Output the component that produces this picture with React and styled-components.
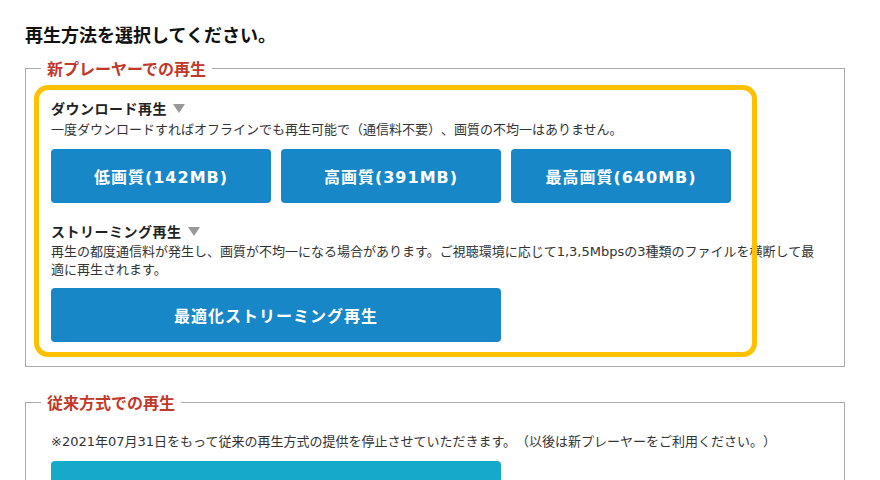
import React from "react";
import styled, { createGlobalStyle } from "styled-components";

const GlobalStyle = createGlobalStyle`
  body {
    margin: 0;
    background: #fff;
    font-family: "Noto Sans CJK JP", "Noto Sans", sans-serif;
    color: #333;
    text-spacing-trim: space-all;
  }
`;

const Page = styled.div`
  padding: 22px 35px 40px 25px;
`;

const Title = styled.h2`
  margin: 0;
  font-size: 18px;
  line-height: 24px;
  font-weight: bold;
  color: #111;
`;

const Section = styled.fieldset`
  margin: ${(p) => (p.$first ? "12px" : "25px")} 0 0;
  border: 1px solid #aaa;
  padding: 0 25px 24px;
  min-width: 0;
`;

const Legend = styled.legend`
  margin-left: -10px;
  padding: 0 6px;
  font-size: 16px;
  line-height: 20px;
  font-weight: bold;
  color: #c0392b;
`;

const Highlight = styled.div`
  position: relative;
`;

const HighlightFrame = styled.div`
  position: absolute;
  left: -17px;
  top: -13px;
  bottom: -15px;
  width: 723px;
  border: 5px solid #ffc000;
  border-radius: 14px;
  box-sizing: border-box;
  pointer-events: none;
`;

const SubHead = styled.div`
  margin-top: ${(p) => p.$top}px;
  display: flex;
  align-items: center;
  gap: 6px;
  font-size: 14px;
  line-height: 20px;
  font-weight: bold;
  letter-spacing: 0.5px;
  color: #222;
`;

const Arrow = styled.span`
  width: 0;
  height: 0;
  border-left: 6px solid transparent;
  border-right: 6px solid transparent;
  border-top: 9px solid #999;
`;

const Desc = styled.p`
  margin: ${(p) => p.$top}px 0 0;
  font-family: "DejaVu Sans", "Noto Sans CJK JP", sans-serif;
  font-size: 13px;
  line-height: 18px;
  color: #333;
`;

const ButtonRow = styled.div`
  display: flex;
  gap: 10px;
  margin-top: ${(p) => p.$top}px;
`;

const PlayButton = styled.button`
  width: ${(p) => p.$width}px;
  height: 54px;
  border: none;
  border-radius: 4px;
  background: ${(p) => (p.$teal ? "#16aaca" : "#1787c7")};
  color: #fff;
  font-family: "DejaVu Sans", "Noto Sans CJK JP", sans-serif;
  font-size: 16px;
  font-weight: bold;
  letter-spacing: 1px;
  cursor: pointer;
`;

const App = () => {
  return (
    <Page>
      <GlobalStyle />
      <Title>再生方法を選択してください。</Title>

      <Section $first>
        <Legend>新プレーヤーでの再生</Legend>
        <Highlight>
          <HighlightFrame />
          <SubHead $top={20}>
            ダウンロード再生
            <Arrow />
          </SubHead>
          <Desc $top={3}>
            一度ダウンロードすればオフラインでも再生可能で（通信料不要）、画質の不均一はありません。
          </Desc>
          <ButtonRow $top={10}>
            <PlayButton $width={220}>低画質(142MB)</PlayButton>
            <PlayButton $width={220}>高画質(391MB)</PlayButton>
            <PlayButton $width={220}>最高画質(640MB)</PlayButton>
          </ButtonRow>

          <SubHead $top={18}>
            ストリーミング再生
            <Arrow />
          </SubHead>
          <Desc $top={2}>
            再生の都度通信料が発生し、画質が不均一になる場合があります。ご視聴環境に応じて1,3,5Mbpsの3種類のファイルを横断して最適に再生されます。
          </Desc>
          <ButtonRow $top={9}>
            <PlayButton $width={450}>最適化ストリーミング再生</PlayButton>
          </ButtonRow>
        </Highlight>
      </Section>

      <Section>
        <Legend>従来方式での再生</Legend>
        <Desc $top={21}>
          ※2021年07月31日をもって従来の再生方式の提供を停止させていただきます。（以後は新プレーヤーをご利用ください。）
        </Desc>
        <ButtonRow $top={10}>
          <PlayButton $width={450} $teal aria-label="従来方式で再生" />
        </ButtonRow>
      </Section>
    </Page>
  );
};

export default App;
